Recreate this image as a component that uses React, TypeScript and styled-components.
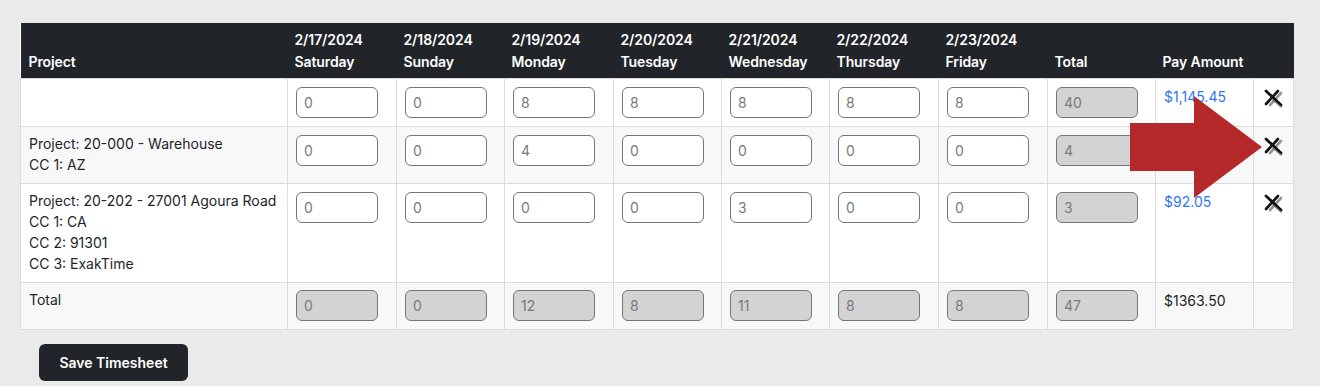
import React from 'react';
import styled, { createGlobalStyle } from 'styled-components';

const GlobalStyle = createGlobalStyle`
    html, body {
        margin: 0;
        padding: 0;
        background: #eaeaea;
        font-family: Inter, "Liberation Sans", sans-serif;
        font-size: 14px;
        color: #212529;
    }
`;

const Page = styled.div`
    padding: 23px 27px 0 20px;
`;

const TableWrap = styled.div`
    position: relative;
`;

const Table = styled.table`
    width: 1273px;
    border-collapse: collapse;
    table-layout: fixed;
    background: #fff;
`;

const HeadCell = styled.th<{ $first?: boolean }>`
    background: #212529;
    color: #fff;
    font-weight: 600;
    text-align: left;
    vertical-align: bottom;
    line-height: 22px;
    padding: 6px 8px 5px ${(p) => (p.$first ? '8px' : '7px')};
    white-space: nowrap;
    letter-spacing: -0.1px;
`;

const Row = styled.tr<{ $striped?: boolean }>`
    background: ${(p) => (p.$striped ? '#f8f8f8' : '#fff')};
`;

const Cell = styled.td`
    border: 1px solid #dcdcdc;
    vertical-align: top;
    padding: 8px;
    line-height: 21px;
`;

const TextCell = styled(Cell)`
    padding-top: 6px;
    padding-bottom: 8px;
`;

const HourInput = styled.input`
    display: block;
    box-sizing: border-box;
    width: 82px;
    height: 31px;
    margin: 0;
    padding: 0 7px;
    border: 1px solid #767676;
    border-radius: 6px;
    background: ${(p) => (p.disabled ? '#d3d3d3' : '#fff')};
    color: #7a7a7a;
    font-family: Inter, "Liberation Sans", sans-serif;
    font-size: 14px;
`;

const TotalInput = styled(HourInput)`
    margin-top: -1px;
`;

const PayCell = styled(Cell)<{ $link?: boolean }>`
    color: ${(p) => (p.$link ? '#2f76f6' : '#212529')};
    padding-top: 7px;
`;

const IconCell = styled(Cell)`
    padding: 9px 0 0 9px;
`;

const Arrow = styled.svg`
    position: absolute;
    left: 1110px;
    top: 73px;
    pointer-events: none;
`;

const SaveButton = styled.button`
    margin: 14px 0 0 19px;
    width: 149px;
    height: 37px;
    border: none;
    border-radius: 6px;
    background: #212529;
    color: #fff;
    font-family: Inter, "Liberation Sans", sans-serif;
    font-size: 14px;
    font-weight: 600;
`;

const widths = [267, 109, 108, 109, 108, 108, 109, 109, 108, 98, 40];

const days = [
    ['2/17/2024', 'Saturday'],
    ['2/18/2024', 'Sunday'],
    ['2/19/2024', 'Monday'],
    ['2/20/2024', 'Tuesday'],
    ['2/21/2024', 'Wednesday'],
    ['2/22/2024', 'Thursday'],
    ['2/23/2024', 'Friday'],
];

const rows = [
    { lines: [] as string[], hours: [0, 0, 8, 8, 8, 8, 8], total: 40, pay: '$1,145.45' },
    { lines: ['Project: 20-000 - Warehouse', 'CC 1: AZ'], hours: [0, 0, 4, 0, 0, 0, 0], total: 4, pay: '$126.00' },
    {
        lines: ['Project: 20-202 - 27001 Agoura Road', 'CC 1: CA', 'CC 2: 91301', 'CC 3: ExakTime'],
        hours: [0, 0, 0, 0, 3, 0, 0],
        total: 3,
        pay: '$92.05',
    },
];

const totals = [0, 0, 12, 8, 11, 8, 8];

// hand drawn looking "remove" cross
const RemoveIcon = () => (
    <svg width="22" height="22" viewBox="0 0 22 22">
        <path d="M18 5 L7 17" stroke="#8f969e" strokeWidth="2.6" strokeLinecap="round" />
        <path d="M15 3 L3 16" stroke="#111" strokeWidth="2.6" strokeLinecap="round" />
        <path d="M3 3 L18 17" stroke="#111" strokeWidth="2.8" strokeLinecap="round" />
        <path d="M10 12 L18 19" stroke="#6b7179" strokeWidth="1.6" strokeLinecap="round" opacity="0.8" />
    </svg>
);

export default function App() {
    return (
        <Page>
            <GlobalStyle />
            <TableWrap>
                <Table>
                    <colgroup>
                        {widths.map((w, i) => (
                            <col key={i} style={{ width: w }} />
                        ))}
                    </colgroup>
                    <thead>
                        <tr>
                            <HeadCell $first>Project</HeadCell>
                            {days.map(([date, day]) => (
                                <HeadCell key={date}>
                                    {date}
                                    <br />
                                    {day}
                                </HeadCell>
                            ))}
                            <HeadCell>Total</HeadCell>
                            <HeadCell>Pay Amount</HeadCell>
                            <HeadCell></HeadCell>
                        </tr>
                    </thead>
                    <tbody>
                        {rows.map((r, i) => (
                            <Row key={i} $striped={i % 2 === 1}>
                                <TextCell>
                                    {r.lines.map((l) => (
                                        <div key={l}>{l}</div>
                                    ))}
                                </TextCell>
                                {r.hours.map((h, j) => (
                                    <Cell key={j}>
                                        <HourInput defaultValue={h} />
                                    </Cell>
                                ))}
                                <Cell>
                                    <HourInput value={r.total} disabled readOnly />
                                </Cell>
                                <PayCell $link>{r.pay}</PayCell>
                                <IconCell>
                                    <RemoveIcon />
                                </IconCell>
                            </Row>
                        ))}
                        <Row $striped>
                            <TextCell>Total</TextCell>
                            {totals.map((t, j) => (
                                <Cell key={j}>
                                    <TotalInput value={t} disabled readOnly />
                                </Cell>
                            ))}
                            <Cell>
                                <TotalInput value={47} disabled readOnly />
                            </Cell>
                            <PayCell>$1363.50</PayCell>
                            <Cell></Cell>
                        </Row>
                    </tbody>
                </Table>
                <Arrow width="134" height="104" viewBox="0 0 134 104">
                    <polygon points="0,27 64,27 64,0 132,51 64,102 64,75 0,75" fill="#b6292a" />
                </Arrow>
            </TableWrap>
            <SaveButton>Save Timesheet</SaveButton>
        </Page>
    );
}
